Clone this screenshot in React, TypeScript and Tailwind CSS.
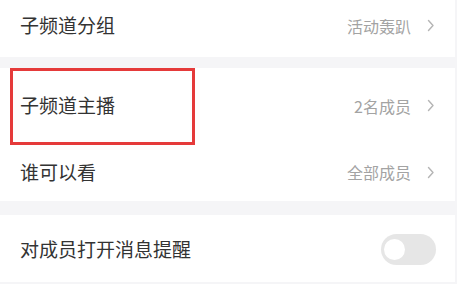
import React from "react";

function Chevron() {
  return (
    <svg width="8" height="13" viewBox="0 0 8 13" className="ml-[16px]">
      <path d="M1.5 1.5 L6 6.5 L1.5 11.5" fill="none" stroke="#b5b5b5" strokeWidth="1.4" strokeLinecap="round" strokeLinejoin="round" />
    </svg>
  );
}

function Row({ label, value, className }: { label: string; value: string; className: string }) {
  return (
    <div className={"flex items-center justify-between pl-[20px] pr-[20px] bg-white " + className}>
      <span className="text-[19px] text-[#333333]">{label}</span>
      <div className="flex items-center">
        <span className="text-[16px] text-[#a3a3a3]">{value}</span>
        <Chevron />
      </div>
    </div>
  );
}

export default function App() {
  return (
    <div
      className="relative w-[457px] h-[284px] overflow-hidden bg-[#f5f5f7] flex flex-col"
      style={{ fontFamily: '"Noto Sans CJK SC", "Noto Sans", sans-serif' }}
    >
      <div className="flex flex-col w-[455px]">
        <Row label="子频道分组" value="活动轰趴" className="h-[57px] pb-[6px]" />
        <div className="h-[11px]" />
        <Row label="子频道主播" value="2名成员" className="h-[74px] pt-[1px]" />
        <Row label="谁可以看" value="全部成员" className="h-[59px] pt-[1px]" />
        <div className="h-[14px]" />
        <div className="flex items-center justify-between pl-[20px] pr-[19px] h-[67px] pt-[2px] bg-white">
          <span className="text-[19px] text-[#333333]">对成员打开消息提醒</span>
          <div className="w-[55px] h-[31px] rounded-full bg-[#e6e6e6] flex items-center pl-[2px]">
            <div className="w-[21px] h-[21px] rounded-full bg-white ml-[1px]" />
          </div>
        </div>
      </div>
      <div className="absolute left-[10px] top-[68px] w-[185px] h-[77px] border-[3px] border-[#e53a3a]" />
    </div>
  );
}
